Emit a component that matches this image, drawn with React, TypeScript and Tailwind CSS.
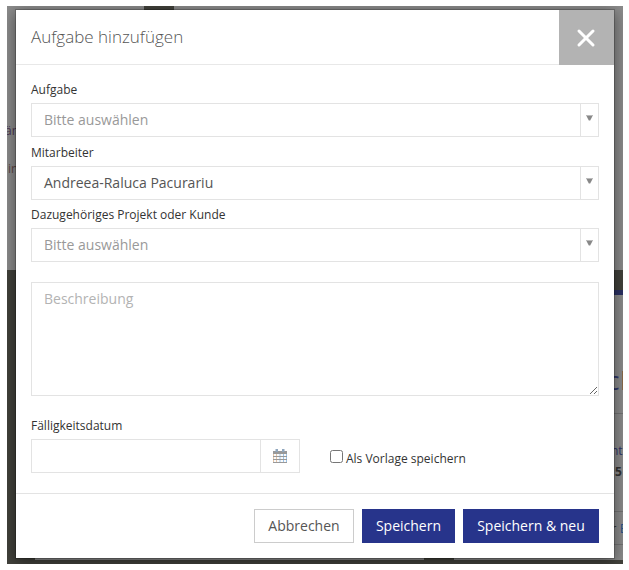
import { X } from "lucide-react";

type SelectProps = {
  label: string;
  value: string;
  selected?: boolean;
};

function SelectField({ label, value, selected }: SelectProps) {
  return (
    <div>
      <label className="block h-[18px] text-[12px] leading-[18px] text-[#333]">{label}</label>
      <div className="mt-1 flex h-[34px] border border-[#e3e3e3]">
        <div
          className={
            selected
              ? "flex-1 pl-3 text-[14px] leading-[32px] text-[#555]"
              : "flex-1 pl-3 text-[14px] leading-[32px] text-[#999]"
          }
        >
          {value}
        </div>
        <div className="w-[18px] border-l border-[#e3e3e3] pt-[11px] pl-[5px]">
          <svg width="7" height="6" viewBox="0 0 7 6">
            <path d="M0 0H7V1H0Z" fill="#bbb" />
            <path d="M0.5 1H6.5L4.2 5.5H2.8Z" fill="#888" />
          </svg>
        </div>
      </div>
    </div>
  );
}

function CalendarIcon() {
  return (
    <svg width="14" height="14" viewBox="0 0 14 14">
      <path d="M0.5 2.5H13.5V13.5H0.5Z" fill="#fafafa" stroke="#999" />
      <path d="M3.5 5V13M0.5 3V13" stroke="#e3c4a8" />
      <path d="M7 5V13M10.5 5V13M13.5 3V13" stroke="#9cc3e8" />
      <path d="M0 7.5H14M0 10.5H14M0 13.5H14" stroke="#999" />
      <path d="M0 2H14V5H0Z" fill="#999" />
      <path d="M2.5 0H5V3H2.5ZM9 0H11.5V3H9Z" fill="#8fa6bd" />
    </svg>
  );
}

// dimmed page behind the dialog
function PageBehind() {
  return (
    <div className="flex h-full flex-col bg-[#42423c] text-[12px]">
      <div className="flex h-[264px] gap-[30px]">
        <div className="w-[137px] bg-[#8c8c8c] pt-[117px] leading-[16px] text-[#4b3552]">
          <div className="-ml-[2px]">är</div>
          <div className="mt-[22px] ml-px text-[#5c4646]">in</div>
        </div>
        <div className="flex-1 bg-[#8c8c8c]" />
      </div>
      <div className="flex h-[290px] gap-[30px] pt-5 pl-7">
        <div className="w-[389px] bg-[#8c8c8c]" />
        <div className="flex flex-1 flex-col items-end overflow-hidden border-t-[5px] border-[#2b3163] bg-[#8c8c8c] whitespace-nowrap">
          <div className="flex h-[119px] w-[13px] items-end border-b border-[#747474] pb-[17px] text-[26px] leading-[32px]">
            <span className="-ml-[3px] text-[#30366a]">c</span>
            <span className="ml-px text-[#8f2727]">h</span>
          </div>
          <div className="h-[98px] w-[11px] border-b border-[#747474] pt-[28px] leading-[18px]">
            <div className="-ml-px text-[#30366a]">nt</div>
            <div className="mt-[3px] pl-[3px] font-bold text-[#333]">5</div>
          </div>
          <div className="h-[33px] w-[9px] border-b border-[#747474] text-[13px] leading-[32px] text-[#28548b]">
            <span className="-ml-[3px] text-[#333]">r</span> E
          </div>
        </div>
      </div>
    </div>
  );
}

export default function App() {
  return (
    <div className="h-[570px] bg-white pt-[6px] pl-[7px] font-['Open_Sans',sans-serif]">
      <div className="relative h-[558px] w-[616px] overflow-hidden">
        <PageBehind />
        <div className="absolute top-[3px] left-2 flex h-[550px] w-[600px] flex-col border border-black/20 bg-white bg-clip-padding shadow-[0_3px_14px_rgba(0,0,0,0.45)]">
          <div className="flex h-[55px] shrink-0 justify-between border-b border-[#e8e8e8]">
            <h4 className="pl-[15px] text-[17px] leading-[54px] font-light text-[#555]">Aufgabe hinzufügen</h4>
            <button className="flex h-[55px] w-[55px] items-center justify-center bg-[#b3b3b3] text-white">
              <X size={28} strokeWidth={2.6} className="mt-px mr-px" />
            </button>
          </div>

          <div className="flex-1 px-[15px] pt-4">
            <div className="flex flex-col gap-[6.5px]">
              <SelectField label="Aufgabe" value="Bitte auswählen" />
              <SelectField label="Mitarbeiter" value="Andreea-Raluca Pacurariu" selected />
              <SelectField label="Dazugehöriges Projekt oder Kunde" value="Bitte auswählen" />
            </div>
            <textarea
              placeholder="Beschreibung"
              className="mt-5 block h-[114px] w-full border border-[#e3e3e3] px-3 py-[6px] text-[14px] leading-[20px] placeholder:text-[#b3b3b3]"
            />
            <div className="mt-[21px] flex">
              <div className="w-[269px]">
                <label className="block h-[18px] text-[12px] leading-[18px] text-[#333]">Fälligkeitsdatum</label>
                <div className="mt-[4px] flex h-[34px] border border-[#e3e3e3]">
                  <input className="w-[228px] px-3 text-[14px] outline-none" />
                  <div className="flex flex-1 items-center justify-center border-l border-[#e3e3e3]">
                    <CalendarIcon />
                  </div>
                </div>
              </div>
              <label className="mt-[33px] ml-[30px] flex h-[18px] text-[12px] leading-[18px] text-[#333]">
                <input type="checkbox" className="mr-[3px] h-[13px] w-[13px]" />
                Als Vorlage speichern
              </label>
            </div>
          </div>

          <div className="flex h-[65px] shrink-0 justify-end gap-2 border-t border-[#e3e3e3] pt-[15px] pr-[15px] text-[14px]">
            <button className="h-[34px] w-[100px] border border-[#ccc] pb-[2px] text-[#555]">Abbrechen</button>
            <button className="h-[34px] w-[93px] bg-[#27348b] pb-[2px] text-white">Speichern</button>
            <button className="h-[34px] w-[136px] bg-[#27348b] pb-[2px] text-white">Speichern &amp; neu</button>
          </div>
        </div>
      </div>
    </div>
  );
}
